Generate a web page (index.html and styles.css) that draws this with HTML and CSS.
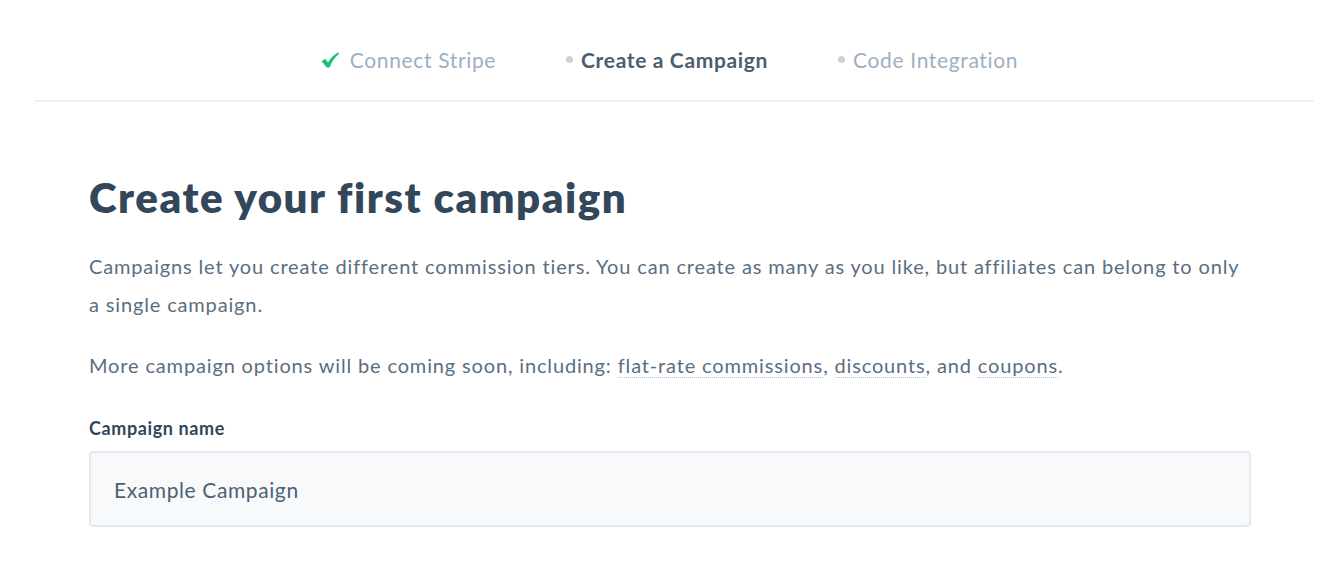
FILE: index.html
```
<!DOCTYPE html>
<html>
<head>
<meta charset="utf-8">
<link rel="stylesheet" href="styles.css">
</head>
<body>
<div class="page">
  <nav class="steps">
    <div class="step done"><svg class="check" viewBox="0 0 18 16" width="18" height="16"><path d="M0.6 9.2 L4.2 6.8 L7 10.2 C9.6 6 13 2.6 17.2 0.3 L17.9 1.9 C13.8 5.4 10.6 9.8 8.6 15.6 L5.8 15.6 Z" fill="#20bf7e"/></svg>Connect Stripe</div>
    <div class="step active"><span class="dot"></span>Create a Campaign</div>
    <div class="step"><span class="dot"></span>Code Integration</div>
  </nav>
  <main class="content">
    <h1 class="title">Create your first campaign</h1>
    <p class="text">Campaigns let you create different commission tiers. You can create as many as you like, but affiliates can belong to only a single campaign.</p>
    <p class="text">More campaign options will be coming soon, including: <span class="soon">flat-rate commissions</span>, <span class="soon">discounts</span>, and <span class="soon">coupons</span>.</p>
    <label class="label">Campaign name</label>
    <div class="input">Example Campaign</div>
  </main>
</div>
</body>
</html>
```
FILE: styles.css
```
* { box-sizing: border-box; }
html, body { margin: 0; padding: 0; background: #fff; }
body { font-family: Lato, "Open Sans", sans-serif; }
.page { padding: 0 24px 0 34px; }
.steps {
  display: flex;
  justify-content: center;
  gap: 70px;
  height: 102px;
  padding: 44px 9px 0 0;
  border-bottom: 2px solid #eef2f6;
  font-size: 21px;
  letter-spacing: 0.65px;
  color: #9eafc0;
}
.step { display: flex; align-items: center; height: 30px; }
.check { margin-right: 11px; margin-top: 1px; }
.dot { width: 7px; height: 7px; border-radius: 50%; background: #c8d2dc; margin-right: 8px; }
.step.active { color: #4b5e70; font-weight: 700; }
.content { padding: 70px 0 0 55px; width: 1217px; }
.title { margin: 0 0 25px; font-size: 42px; letter-spacing: 1.55px; font-weight: 800; color: #33475b; line-height: 50px; }
.text { margin: 0 0 23px; font-size: 20px; letter-spacing: 0.85px; line-height: 38px; color: #5a6e82; }
.soon { border-bottom: 1px dotted #b8c4d0; }
.label { display: block; margin-top: 33px; font-size: 18px; letter-spacing: 0.6px; font-weight: 700; color: #33475b; line-height: 22px; }
.input {
  margin-top: 12px;
  height: 76px;
  border: 2px solid #e4eaf0;
  border-radius: 4px;
  background: #f7f9fb;
  padding: 0 0 0 23px;
  display: flex;
  align-items: center;
  font-size: 21px;
  letter-spacing: 0.6px;
  color: #4e6173;
}
```
